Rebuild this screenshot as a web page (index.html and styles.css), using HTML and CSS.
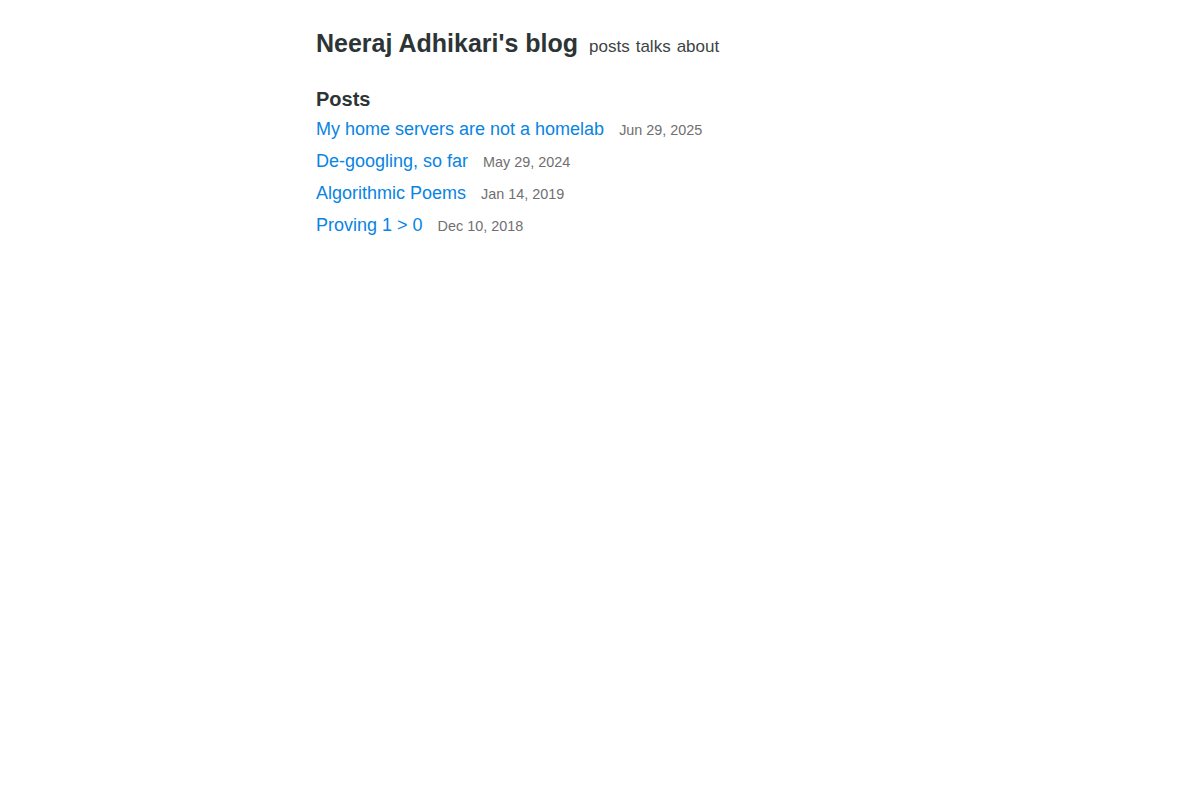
FILE: index.html
```html
<!DOCTYPE html>
<html>
<head>
<meta charset="utf-8">
<title>Neeraj Adhikari's blog</title>
<link rel="stylesheet" href="styles.css">
</head>
<body>
<div class="container">
  <header class="site-header">
    <a class="site-title" href="#">Neeraj Adhikari's blog</a>
    <nav class="site-nav">
      <a href="#">posts</a>
      <a href="#">talks</a>
      <a href="#">about</a>
    </nav>
  </header>
  <main>
    <h2 class="section-title">Posts</h2>
    <ul class="post-list">
      <li><a href="#">My home servers are not a homelab</a><span class="date">Jun 29, 2025</span></li>
      <li><a href="#">De-googling, so far</a><span class="date">May 29, 2024</span></li>
      <li><a href="#">Algorithmic Poems</a><span class="date">Jan 14, 2019</span></li>
      <li><a href="#">Proving 1 &gt; 0</a><span class="date">Dec 10, 2018</span></li>
    </ul>
  </main>
</div>
</body>
</html>
```
FILE: styles.css
```css
html, body {
  margin: 0;
  padding: 0;
  background: #fff;
}
body {
  font-family: "Liberation Sans", Arial, sans-serif;
  color: #2d3436;
}
.container {
  max-width: 568px;
  margin: 0 auto;
  padding-top: 26px;
}
.site-header {
  display: flex;
  align-items: baseline;
  gap: 11px;
}
.site-title {
  font-size: 25px;
  font-weight: bold;
  color: #2d3436;
  text-decoration: none;
  line-height: 34px;
}
.site-nav {
  display: flex;
  gap: 6px;
  font-size: 17px;
}
.site-nav a {
  color: #3d4446;
  text-decoration: none;
}
.section-title {
  font-size: 20px;
  font-weight: bold;
  margin: 27px 0 0;
  line-height: 24px;
}
.post-list {
  list-style: none;
  margin: 2px 0 0;
  padding: 0;
}
.post-list li {
  font-size: 18px;
  line-height: 32px;
}
.post-list a {
  color: #0984e3;
  text-decoration: none;
}
.date {
  font-size: 14.4px;
  line-height: 1;
  color: #707070;
  margin-left: 15px;
}
```
